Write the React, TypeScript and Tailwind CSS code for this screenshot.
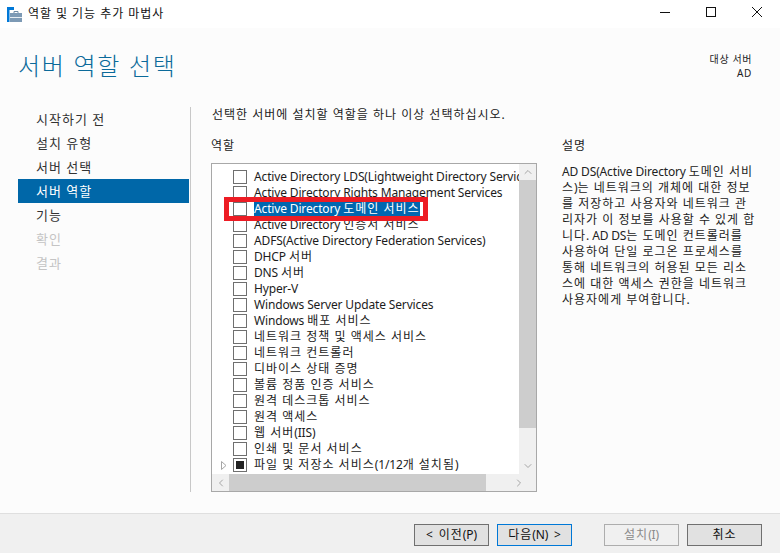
import { ChevronUp, ChevronDown, ChevronLeft, ChevronRight } from 'lucide-react';

const font = { fontFamily: '"Noto Sans", "Noto Sans CJK KR", sans-serif' };

const steps = [
  { label: '시작하기 전' },
  { label: '설치 유형' },
  { label: '서버 선택' },
  { label: '서버 역할', active: true },
  { label: '기능' },
  { label: '확인', disabled: true },
  { label: '결과', disabled: true },
];

const roles = [
  'Active Directory LDS(Lightweight Directory Services)',
  'Active Directory Rights Management Services',
  'Active Directory 도메인 서비스',
  'Active Directory 인증서 서비스',
  'ADFS(Active Directory Federation Services)',
  'DHCP 서버',
  'DNS 서버',
  'Hyper-V',
  'Windows Server Update Services',
  'Windows 배포 서비스',
  '네트워크 정책 및 액세스 서비스',
  '네트워크 컨트롤러',
  '디바이스 상태 증명',
  '볼륨 정품 인증 서비스',
  '원격 데스크톱 서비스',
  '원격 액세스',
  '웹 서버(IIS)',
  '인쇄 및 문서 서비스',
];

const description = [
  'AD DS(Active Directory 도메인 서비',
  '스)는 네트워크의 개체에 대한 정보',
  '를 저장하고 사용자와 네트워크 관',
  '리자가 이 정보를 사용할 수 있게 합',
  '니다. AD DS는 도메인 컨트롤러를',
  '사용하여 단일 로그온 프로세스를',
  '통해 네트워크의 허용된 모든 리소',
  '스에 대한 액세스 권한을 네트워크',
  '사용자에게 부여합니다.',
];

// Hangul runs sit wider and Latin runs tighter than the installed fonts
function Txt({ children }: { children: string }) {
  const parts = children.split(/([\uAC00-\uD7A3]+(?:\s+[\uAC00-\uD7A3]+)*)/).filter(Boolean);
  return (
    <span className="whitespace-pre">
      {parts.map((p, i) => (
        <span key={i} className={/[\uAC00-\uD7A3]/.test(p) ? 'tracking-[1px]' : 'tracking-[-0.15px]'}>
          {p}
        </span>
      ))}
    </span>
  );
}

function RoleRow({ label, selected }: { label: string; selected?: boolean }) {
  return (
    <div className="flex h-4 items-center pl-[21px] whitespace-nowrap">
      <div className="h-[14px] w-[14px] shrink-0 border border-[#6f6f6f] bg-white" />
      <span className={`ml-[7px] text-[12px] leading-4 ${selected ? 'bg-[#0067b0] text-white' : 'text-[#1c1c1c]'}`}>
        <Txt>{label}</Txt>
      </span>
    </div>
  );
}

function WizardButton({ label, variant }: { label: string; variant?: 'primary' | 'disabled' }) {
  const tone =
    variant === 'primary'
      ? 'border-[#0078d7] bg-[#e1e1e1] text-[#111]'
      : variant === 'disabled'
        ? 'border-[#adadad] bg-[#f0f0f0] text-[#8a8a8a]'
        : 'border-[#707070] bg-[#e1e1e1] text-[#111]';
  return (
    <button className={`flex h-[22px] w-[75px] items-center justify-center border text-[12px] ${tone}`}>
      <Txt>{label}</Txt>
    </button>
  );
}

export default function App() {
  return (
    <div className="flex h-[553px] w-[780px] flex-col overflow-hidden bg-[#fcfcfc]" style={font}>
      {/* Title bar */}
      <div className="flex h-[28px] items-center bg-white pl-[7px]">
        <svg width="15" height="15" viewBox="0 0 15 15" className="shrink-0">
          <rect x="0" y="0" width="7" height="3" fill="#0078d7" />
          <rect x="0" y="3" width="2.5" height="12" fill="#0078d7" />
          <rect x="3" y="6" width="12" height="9" fill="#7d9ab5" />
          <rect x="3" y="10" width="12" height="1" fill="#e8eef3" />
          <path d="M7 6V4.5h4V6" fill="none" stroke="#6f8ba5" />
        </svg>
        <span className="ml-[6px] text-[12px] tracking-[0.95px] text-[#111]">역할 및 기능 추가 마법사</span>
        <div className="ml-auto flex items-center">
          <svg width="46" height="28" viewBox="0 0 46 28"><path d="M18 12.5h10" stroke="#111" /></svg>
          <svg width="46" height="28" viewBox="0 0 46 28"><rect x="18.5" y="7.5" width="9" height="9" fill="none" stroke="#111" /></svg>
          <svg width="46" height="28" viewBox="0 0 46 28"><path d="M18 7l10 10M28 7L18 17" stroke="#111" /></svg>
        </div>
      </div>

      {/* Heading */}
      <div className="flex h-[79px] items-start justify-between pl-[18px] pr-[28px]">
        <h1 className="mt-[18px] text-[24px] font-light leading-[40px] tracking-[1.7px] text-[#0b6a9a]">서버 역할 선택</h1>
        <div className="mt-[24px] text-right text-[10px] leading-[14px] tracking-[0.6px] text-[#222]">
          <div>대상 서버</div>
          <div>AD</div>
        </div>
      </div>

      {/* Body */}
      <div className="flex h-[385px] pl-[18px]">
        <nav className="w-[171px]">
          {steps.map((s) => (
            <div
              key={s.label}
              className={`flex h-[24px] items-center pl-[18px] pt-[2px] text-[13px] tracking-[1px] ${
                s.active ? 'bg-[#0067a8] text-white' : s.disabled ? 'text-[#c4c4c4]' : 'text-[#333]'
              }`}
            >
              {s.label}
            </div>
          ))}
        </nav>
        <div className="ml-[1px] w-[1px] bg-[#c8c8c8]" />
        <div className="ml-[20px] flex-1">
          <p className="pl-[1px] text-[12px] leading-4 text-[#222]">
            <Txt>선택한 서버에 설치할 역할을 하나 이상 선택하십시오.</Txt>
          </p>
          <div className="mt-[15px] flex">
            <div className="w-[326px]">
              <div className="text-[12px] leading-4 text-[#222]"><Txt>역할</Txt></div>
              <div className="relative mt-[9px] flex h-[329px] flex-col border border-[#a8a8a8] bg-white">
                <div className="flex min-h-0 flex-1">
                  <div className="min-w-0 flex-1 overflow-hidden pt-[5px]">
                    <div className="h-[306px] overflow-hidden">
                      {roles.map((r, i) => (
                        <RoleRow key={r} label={r} selected={i === 2} />
                      ))}
                      <div className="flex h-4 items-center whitespace-nowrap pl-[9px]">
                        <svg width="6" height="9" viewBox="0 0 6 9" className="shrink-0">
                          <path d="M0.5 0.5L5 4.5L0.5 8.5Z" fill="#fff" stroke="#a6a6a6" />
                        </svg>
                        <div className="ml-[6px] flex h-[14px] w-[14px] shrink-0 items-center justify-center border border-[#6f6f6f]">
                          <div className="h-[8px] w-[8px] bg-[#222]" />
                        </div>
                        <span className="ml-[7px] text-[12px] leading-4 text-[#1c1c1c]">
                          <Txt>파일 및 저장소 서비스(1/12개 설치됨)</Txt>
                        </span>
                      </div>
                    </div>
                  </div>
                  {/* vertical scrollbar */}
                  <div className="flex w-[17px] shrink-0 flex-col bg-[#f0f0f0]">
                    <div className="flex h-[16px] items-center justify-center">
                      <ChevronUp size={12} className="text-[#a6a6a6]" />
                    </div>
                    <div className="h-[248px] bg-[#cdcdcd]" />
                    <div className="mt-auto flex h-[16px] items-center justify-center">
                      <ChevronDown size={12} className="text-[#a6a6a6]" />
                    </div>
                  </div>
                </div>
                {/* horizontal scrollbar */}
                <div className="flex h-[17px] shrink-0 bg-[#f0f0f0]">
                  <div className="flex w-[17px] items-center justify-center">
                    <ChevronLeft size={12} className="text-[#a6a6a6]" />
                  </div>
                  <div className="w-[257px] bg-[#cdcdcd]" />
                  <div className="ml-auto flex w-[34px] items-center justify-center">
                    <ChevronRight size={12} className="text-[#a6a6a6]" />
                  </div>
                </div>
                {/* red highlight */}
                <div className="absolute left-[12px] top-[33px] h-[24px] w-[204px] border-[5px] border-[#ed1c24]" />
              </div>
            </div>
            <div className="ml-[25px] w-[200px]">
              <div className="text-[12px] leading-4 text-[#222]"><Txt>설명</Txt></div>
              <div className="mt-[10px] text-[12px] leading-4 text-[#222]">
                {description.map((line) => (
                  <div key={line} className="whitespace-nowrap"><Txt>{line}</Txt></div>
                ))}
              </div>
            </div>
          </div>
        </div>
      </div>

      {/* Footer */}
      <div className="mt-auto flex h-[40px] items-start border-t border-[#dfdfdf] bg-[#f0f0f0] pl-[414px] pt-[10px]">
        <WizardButton label="<  이전(P)" />
        <div className="ml-[8px]"><WizardButton label="다음(N)  >" variant="primary" /></div>
        <div className="ml-[32px]"><WizardButton label="설치(I)" variant="disabled" /></div>
        <div className="ml-[8px]"><WizardButton label="취소" /></div>
      </div>
    </div>
  );
}
